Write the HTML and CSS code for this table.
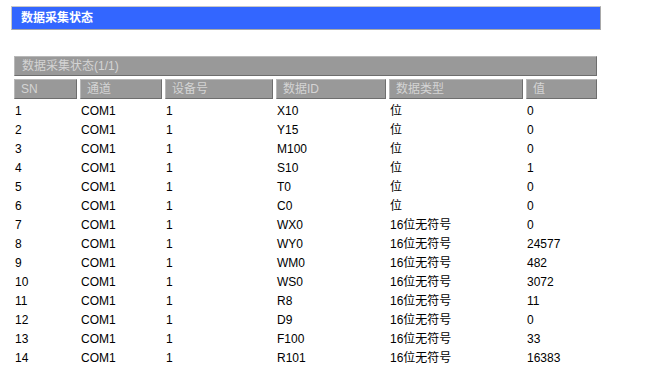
FILE: index.html
```html
<!DOCTYPE html>
<html lang="zh">
<head>
<meta charset="utf-8">
<title>数据采集状态</title>
<link rel="stylesheet" href="styles.css">
</head>
<body>
<div class="page">
  <div class="banner">数据采集状态</div>
  <table class="grid">
    <colgroup>
      <col class="c-sn"><col class="c-ch"><col class="c-dev"><col class="c-id"><col class="c-type"><col class="c-val">
    </colgroup>
    <tr><td class="caption" colspan="6">数据采集状态(1/1)</td></tr>
    <tr class="head"><th>SN</th><th>通道</th><th>设备号</th><th>数据ID</th><th>数据类型</th><th>值</th></tr>
    <tr><td>1</td><td>COM1</td><td>1</td><td>X10</td><td>位</td><td>0</td></tr>
    <tr><td>2</td><td>COM1</td><td>1</td><td>Y15</td><td>位</td><td>0</td></tr>
    <tr><td>3</td><td>COM1</td><td>1</td><td>M100</td><td>位</td><td>0</td></tr>
    <tr><td>4</td><td>COM1</td><td>1</td><td>S10</td><td>位</td><td>1</td></tr>
    <tr><td>5</td><td>COM1</td><td>1</td><td>T0</td><td>位</td><td>0</td></tr>
    <tr><td>6</td><td>COM1</td><td>1</td><td>C0</td><td>位</td><td>0</td></tr>
    <tr><td>7</td><td>COM1</td><td>1</td><td>WX0</td><td>16位无符号</td><td>0</td></tr>
    <tr><td>8</td><td>COM1</td><td>1</td><td>WY0</td><td>16位无符号</td><td>24577</td></tr>
    <tr><td>9</td><td>COM1</td><td>1</td><td>WM0</td><td>16位无符号</td><td>482</td></tr>
    <tr><td>10</td><td>COM1</td><td>1</td><td>WS0</td><td>16位无符号</td><td>3072</td></tr>
    <tr><td>11</td><td>COM1</td><td>1</td><td>R8</td><td>16位无符号</td><td>11</td></tr>
    <tr><td>12</td><td>COM1</td><td>1</td><td>D9</td><td>16位无符号</td><td>0</td></tr>
    <tr><td>13</td><td>COM1</td><td>1</td><td>F100</td><td>16位无符号</td><td>33</td></tr>
    <tr><td>14</td><td>COM1</td><td>1</td><td>R101</td><td>16位无符号</td><td>16383</td></tr>
  </table>
</div>
</body>
</html>
```

FILE: styles.css
```css
html, body {
  margin: 0;
  padding: 0;
  background: #fff;
}
body {
  font-family: "Liberation Sans", Arial, "Noto Sans CJK SC", sans-serif;
  font-size: 12px;
  color: #000;
}
.page {
  padding: 6px 0 0 11px;
  width: 590px;
}
.banner {
  box-sizing: border-box;
  width: 590px;
  height: 24px;
  background: #3366ff;
  border: 1px solid #a8a8a8;
  border-top-color: #c8c8c8;
  border-left-color: #c8c8c8;
  color: #fff;
  font-weight: bold;
  line-height: 22px;
  padding-left: 9px;
}
.grid {
  margin-top: 23px;
  table-layout: fixed;
  width: 589px;
  border-collapse: separate;
  border-spacing: 3px;
}
.c-sn { width: 63px; }
.c-ch { width: 82px; }
.c-dev { width: 108px; }
.c-id { width: 110px; }
.c-type { width: 134px; }
.c-val { width: 71px; }
.grid td, .grid th {
  padding: 2px 0 0 1px;
  height: 16px;
  line-height: 14px;
  text-align: left;
  font-weight: normal;
  white-space: nowrap;
  overflow: hidden;
  box-sizing: border-box;
}
.grid .caption,
.grid .head th {
  background: #999;
  color: #d4d4d4;
  height: 20px;
  line-height: 18px;
  padding-top: 0;
  border: 1px solid #6e6e6e;
  border-top-color: #b8b8b8;
  border-left-color: #b8b8b8;
}
.grid .caption {
  padding-left: 7px;
}
.grid .head th {
  padding-left: 6px;
}
```
